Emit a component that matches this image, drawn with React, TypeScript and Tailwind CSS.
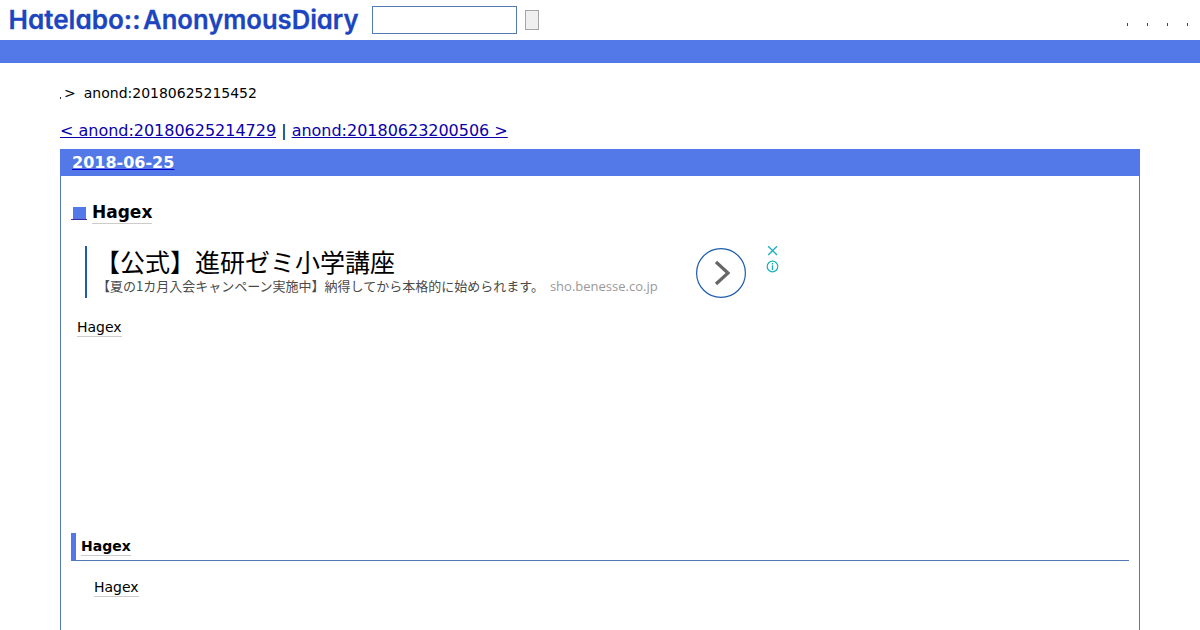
const MENU_ITEMS = ["home", "search", "write", "login"];

function Logo() {
  return (
    <svg
      width="358"
      height="40"
      viewBox="0 0 358 40"
      className="shrink-0 overflow-visible fill-[#1c45c0] stroke-[#1c45c0] stroke-[0.3] font-['Inter',sans-serif] text-[26px] font-semibold [font-feature-settings:'cv11']"
    >
      <text x="0.5" y="29" textLength="132" lengthAdjust="spacingAndGlyphs">Hatelabo::</text>
      <text x="135" y="28.5" textLength="215.5" lengthAdjust="spacingAndGlyphs">AnonymousDiary</text>
    </svg>
  );
}

function Header() {
  return (
    <header>
      <div className="flex h-10 items-center pl-2">
        <Logo />
        <input type="text" className="ml-1.5 h-7 w-[145px] border border-[#5279b5] bg-white" />
        <button type="button" className="ml-2 h-5 w-3.5 border border-[#a5a5a5] bg-[#efefef]" />
        <nav className="mt-[9px] mr-3 ml-auto flex gap-[19px]">
          {MENU_ITEMS.map((item) => (
            <span key={item} className="h-[3px] w-px bg-[#444]" />
          ))}
        </nav>
      </div>
      <div className="h-[23px] bg-[#5279e7]" />
    </header>
  );
}

function Ad() {
  return (
    <div className="mt-[23px] ml-3.5 flex h-[52px] font-['Noto_Sans_CJK_JP',sans-serif]">
      <div className="w-[611px] border-l-2 border-[#1d5cab] pl-2">
        <div className="-mt-0.5 h-[34px] text-[25px] leading-[34px] whitespace-nowrap text-black">
          【公式】進研ゼミ小学講座
        </div>
        <div className="mt-px ml-0.5 flex h-[14px] items-center text-[13px] leading-[14px] whitespace-nowrap text-[#4a4a4a]">
          <span>【夏の1カ月入会キャンペーン実施中】納得してから本格的に始められます。</span>
          <span className="ml-1.5 font-['Open_Sans',sans-serif] text-[#999]">sho.benesse.co.jp</span>
        </div>
      </div>
      <svg width="50" height="50" viewBox="0 0 50 50" className="mt-0.5 shrink-0" fill="none">
        <circle cx="25" cy="25" r="24.4" stroke="#1d5cab" strokeWidth="1.2" />
        <path d="M20 14 L32 25 L20 36" stroke="#666" strokeWidth="3.2" />
      </svg>
      <svg width="14" height="30" viewBox="0 0 14 30" className="ml-5 shrink-0" fill="none" stroke="#1bb0bc">
        <path d="M2.2 .2 L11 9 M11 .2 L2.2 9" strokeWidth="1.3" />
        <circle cx="6.5" cy="20.5" r="5.3" strokeWidth="1.2" />
        <path d="M6.5 19.3 V24 M6.5 17 V18.4" strokeWidth="1.4" />
      </svg>
    </div>
  );
}

export default function App() {
  return (
    <div className="h-[630px] overflow-hidden bg-white font-['DejaVu_Sans',sans-serif] text-black">
      <Header />
      <main className="px-[60px]">
        <div className="mt-5 flex h-5 items-center text-sm leading-5">
          <span className="mt-[9px] mr-[3px] h-0.5 w-px bg-[#333]" />
          <span className="mr-2">&gt;</span>
          <span>anond:20180625215452</span>
        </div>

        <div className="mt-[18px] h-7 text-base leading-5 tracking-[-0.015px]">
          <a href="#" className="text-[#0a00a8] underline">&lt; anond:20180625214729</a>
          {" | "}
          <a href="#" className="text-[#0a00a8] underline">anond:20180623200506 &gt;</a>
        </div>

        <section className="h-[600px] border border-[#5279b5]">
          <h2 className="-mx-px -mt-px h-[27px] bg-[#5279e7] pl-3 text-base leading-[27px] font-bold">
            <a href="#" className="underline decoration-[#0000cc]">
              <span className="text-white">2018-06-25</span>
            </a>
          </h2>

          <div className="px-2.5">
            <h3 className="mt-[25px] flex h-[22px] items-start">
              <a href="#" className="mt-[5px] flex h-[14px] w-4 justify-center border-b border-[#3a2a9c] px-px">
                <span className="mt-px h-3 w-[13px] bg-[#5279e7]" />
              </a>
              <span className="ml-[5px] h-[23px] border-b border-[#ccc] text-[17px] leading-[22px] font-bold">Hagex</span>
            </h3>

            <Ad />

            <p className="mt-5 ml-1.5 h-[19px] text-sm leading-[18px]">
              <span className="inline-block h-[19px] border-b border-[#ccc]">Hagex</span>
            </p>

            <h4 className="mt-[196px] flex h-7 border-b border-l-5 border-b-[#5279b5] border-l-[#5279e7] pl-[5px] text-sm font-bold">
              <span className="mt-1 h-[19px] border-b border-[#ccc] leading-[18px]">Hagex</span>
            </h4>
            <p className="mt-[17px] ml-[23px] text-sm leading-[18px]">
              <span className="inline-block h-[19px] border-b border-[#ccc]">Hagex</span>
            </p>
          </div>
        </section>
      </main>
    </div>
  );
}
